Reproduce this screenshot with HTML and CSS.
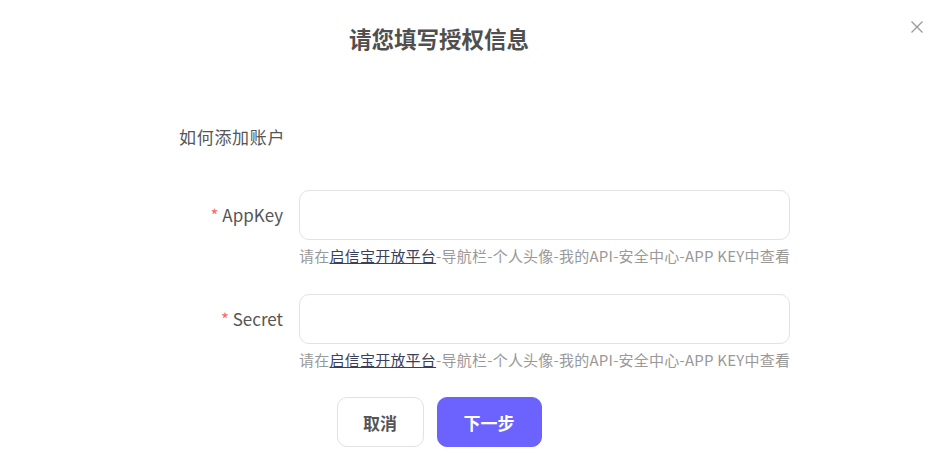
FILE: index.html
```html
<!DOCTYPE html>
<html lang="zh-CN">
<head>
    <meta charset="UTF-8">
    <meta name="viewport" content="width=device-width, initial-scale=1.0">
    <title>请您填写授权信息</title>
    <link rel="stylesheet" href="styles.css">
</head>
<body>
    <div class="auth-dialog">
        <div class="dialog-header">
            <h2 class="dialog-title">请您填写授权信息</h2>
            <button type="button" class="close-btn" aria-label="关闭">
                <svg width="12" height="12" viewBox="0 0 12 12">
                    <path d="M0.5 0.5 L11.5 11.5 M11.5 0.5 L0.5 11.5" stroke="#999" stroke-width="1.3" fill="none"/>
                </svg>
            </button>
        </div>

        <form class="auth-form">
            <p class="how-to">如何添加账户</p>

            <div class="form-item">
                <label class="form-label" for="appKey"><span class="required">*</span> AppKey</label>
                <div class="form-field">
                    <input type="text" id="appKey" class="text-input">
                    <p class="help-text">请在<a href="#">启信宝开放平台</a>-导航栏-个人头像-我的API-安全中心-APP KEY中查看</p>
                </div>
            </div>

            <div class="form-item">
                <label class="form-label" for="secret"><span class="required">*</span> Secret</label>
                <div class="form-field">
                    <input type="text" id="secret" class="text-input">
                    <p class="help-text">请在<a href="#">启信宝开放平台</a>-导航栏-个人头像-我的API-安全中心-APP KEY中查看</p>
                </div>
            </div>

            <div class="form-actions">
                <button type="button" class="btn btn-cancel">取消</button>
                <button type="submit" class="btn btn-primary">下一步</button>
            </div>
        </form>
    </div>
</body>
</html>
```

FILE: styles.css
```css
body {
    margin: 0;
    padding: 0;
    background: #fff;
    font-family: "Microsoft YaHei", "Noto Sans CJK SC", "Liberation Sans", sans-serif;
}

.auth-dialog {
    position: relative;
    width: 946px;
    height: 461px;
    background: #fff;
    overflow: hidden;
}

.dialog-header {
    width: 878px;
    padding-top: 22px;
}

.dialog-title {
    margin: 0;
    text-align: center;
    font-size: 22.5px;
    line-height: 32px;
    font-weight: bold;
    color: #4f4f4f;
}

.close-btn {
    position: absolute;
    top: 21px;
    right: 23px;
    width: 12px;
    height: 12px;
    padding: 0;
    border: none;
    background: none;
    cursor: pointer;
    display: flex;
}

.auth-form {
    width: 878px;
}

.how-to {
    margin: 0;
    padding: 70px 0 0 179px;
    font-size: 17px;
    letter-spacing: 0.7px;
    line-height: 26px;
    color: #555;
}

.form-item {
    display: flex;
    gap: 16px;
}

.how-to + .form-item {
    margin-top: 40px;
}

.form-label {
    width: 120px;
    padding-left: 163px;
    text-align: right;
    font-size: 17px;
    line-height: 50px;
    color: #555;
}

.required {
    color: #f56c6c;
}

.form-field {
    width: 491px;
}

.text-input {
    display: block;
    box-sizing: border-box;
    width: 100%;
    height: 50px;
    border: 1px solid #e2e2e2;
    border-radius: 10px;
    padding: 0 14px;
    font-size: 16px;
    outline: none;
}

.help-text {
    margin: 6px 0 0;
    font-size: 15px;
    letter-spacing: 0.23px;
    line-height: 20px;
    color: #999;
    white-space: nowrap;
}

.help-text a {
    color: #3a3f5c;
    text-decoration: underline;
}

.form-item + .form-item {
    margin-top: 28px;
}

.form-actions {
    display: flex;
    justify-content: center;
    gap: 13px;
    margin-top: 27px;
}

.btn {
    height: 50px;
    border-radius: 10px;
    font-size: 17px;
    font-weight: bold;
    font-family: inherit;
    cursor: pointer;
}

.btn-cancel {
    width: 87px;
    background: #fff;
    color: #555;
    border: 1px solid #e2e2e2;
}

.btn-primary {
    width: 105px;
    background: #6c63ff;
    color: #fff;
    border: 1px solid #6c63ff;
}
```
